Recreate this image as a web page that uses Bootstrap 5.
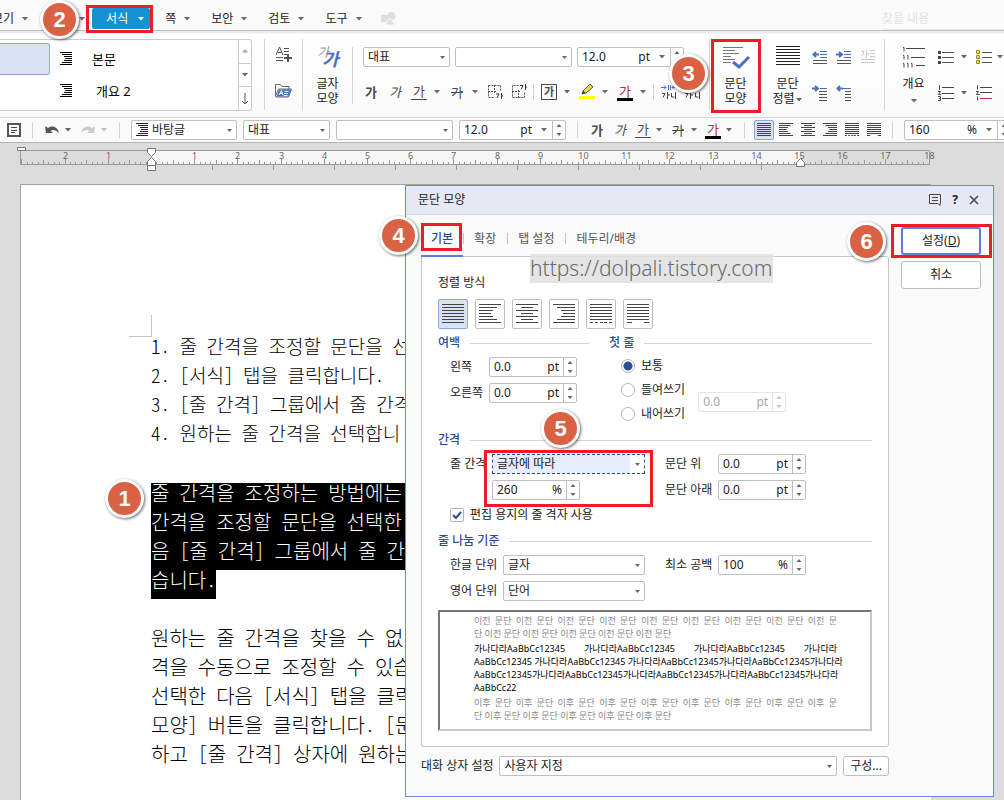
<!DOCTYPE html>
<html lang="ko">
<head>
  <meta charset="UTF-8">
  <meta name="viewport" content="width=device-width, initial-scale=1.0">
  <title>문단 모양</title>
  <link href="https://cdn.jsdelivr.net/npm/bootstrap@5.3.0/dist/css/bootstrap.min.css" rel="stylesheet">
  <style>
    body {
      font-family: "Noto Sans", "Noto Sans CJK KR", sans-serif;
      font-size: 12px;
      line-height: 20px;
      color: #222;
      background: #dcdcdc;
    }
    button, input, select { font: inherit; color: inherit; }
    button { background: none; border: 0; padding: 0; }
    svg { display: block; flex-shrink: 0; }
    .keep > * { flex-shrink: 0; }

    /* menu bar */
    .menubar { height: 31px; padding-top: 7px; background: #fafafa; border-bottom: 1px solid #bdbdbd; }
    .menu-btn { display: flex; align-items: center; gap: 7px; padding: 0 10px; height: 24px; }
    .menu-first { margin-left: -18px; }
    .menu-insert { width: 57px; justify-content: flex-end; }
    .menu-on { margin: 0 5px 0 -4px; padding: 0 5px 0 14px; gap: 9px; height: 21px; background: #1791d3; color: #fff; border-radius: 2px; }
    .find-box { width: 122px; height: 22px; border: 0; border-bottom: 1px solid #e8e8e8; background: none; padding: 0; }
    .find-box::placeholder { color: #e2e2e2; opacity: 1; }

    /* ribbon */
    .ribbon { height: 87px; padding-top: 8px; background: linear-gradient(#ececec 2px, #fff 3px, #fafafa); border-bottom: 1px solid #d6d6d6; }
    .vline { width: 1px; background: #d4d4d4; }
    .vline-tall { height: 71px; }
    .vline-mid { height: 57px; margin-top: 8px; }
    .vline-low { height: 16px; margin: 0 -1px 0 -2px; }
    .gallery { width: 252px; height: 72px; margin-right: 12px; border: 1px solid #ccc; border-left: 0; border-radius: 0 3px 3px 0; background: #fff; }
    .style-on { width: 50px; height: 32px; margin-top: 3px; border: 1px solid #8ea6de; border-left: 0; border-radius: 0 3px 3px 0; background: #d9e1f5; }
    .style-list { padding-top: 3px; }
    .style-row { display: flex; align-items: center; height: 32px; padding-left: 10px; gap: 20px; font-size: 13px; color: #000; }
    .gallery-scroll { width: 13px; border-left: 1px solid #ccc; }
    .gallery-scroll button { display: flex; align-items: center; justify-content: center; flex: 1; }
    .gallery-scroll button + button { border-top: 1px solid #ccc; }
    .side-tools { width: 37px; padding-top: 8px; gap: 20px; }
    .big-btn { position: relative; width: 49px; height: 72px; padding-top: 7px; line-height: 15px; display: flex; flex-direction: column; align-items: center; }
    .big-btn svg.pic { margin-bottom: 6px; overflow: visible; }
    .para-btn { margin: 0 3px 0 1px; }
    .font-group { margin: 8px 10px 0; width: 336px; }
    .field-row { gap: 5px; margin-bottom: 15px; }
    .tool-row { display: flex; align-items: center; gap: 8px; height: 20px; }
    .tool-stack { display: grid; gap: 16px; margin-top: 8px; }
    .tool { display: flex; align-items: center; gap: 6px; }
    .glyph { width: 16px; text-align: center; font-size: 13px; line-height: 18px; color: #4a4a4a; }
    .glyph-u { border-bottom: 1px solid #4a4a4a; line-height: 15px; }
    .glyph-box { border: 1px solid #4a4a4a; font-size: 11px; line-height: 14px; font-weight: bold; }
    .glyph-color { border-bottom: 3px solid #000; color: #b23030; line-height: 14px; }

    /* fields */
    .pick, .spin { height: 20px; border: 1px solid #bfbfbf; border-radius: 2px; background-color: #fff; }
    .pick {
      appearance: none;
      padding: 0 16px 0 4px;
      line-height: 18px;
      background-image: url("data:image/svg+xml,%3Csvg xmlns='http://www.w3.org/2000/svg' width='5' height='3'%3E%3Cpath d='M0 0h5L2.5 3z' fill='%23666'/%3E%3C/svg%3E");
      background-repeat: no-repeat;
      background-position: right 4px center;
    }
    .spin { display: flex; align-items: center; line-height: 18px; }
    .spin input { width: 0; flex: 1; min-width: 0; border: 0; padding: 0 0 0 4px; height: 18px; background: none; outline: 0; }
    .spin .unit { margin-right: 4px; }
    .spin .drop { width: 16px; display: flex; justify-content: center; }
    .spin .updown { align-self: stretch; width: 13px; border-left: 1px solid #bfbfbf; display: flex; align-items: center; justify-content: center; }
    .w-name { width: 87px; }
    .w-font { width: 117px; }
    .w-size { width: 107px; }
    .faded { opacity: .4; }

    /* quick bar */
    .quickbar { height: 25px; padding-left: 7px; gap: 8px; background: #fafafa; border-bottom: 1px solid #b4b4b4; }
    .quickbar > .vline { height: 16px; margin: 0 3px; }
    .quickbar .tool { gap: 4px; }
    .quick-fields { gap: 6px; }
    .quick-text { gap: 7px; }
    .quick-style { width: 106px; padding-left: 4px; }
    .quick-style .pick { border: 0; height: 18px; flex: 1; width: 0; }
    .quick-aligns { gap: 2px; margin: 0 -3px 0 -2px; }
    .mini-align { width: 20px; height: 20px; display: flex; align-items: center; justify-content: center; border-radius: 2px; color: #444; }
    .mini-align.on, .align-btn.on { background: #d9e1f5; border: 1px solid #8ea6de; }

    /* document */
    .sheet { max-width: 911px; min-height: 640px; margin-left: 20px; padding: 146px 0 0 130px; background: #fff; border: 1px solid #a3a3a3; border-right: 0; }
    .doc { color: #000; font: 300 20px/29px "Noto Sans CJK KR", sans-serif; font-feature-settings: "hwid"; white-space: nowrap; overflow: hidden; }
    .doc p { margin: 0; }
    .doc .steps { font-size: 19px; }
    .doc-area { position: relative; }
    .corner { position: absolute; left: -22px; top: -16px; width: 23px; height: 22px; border: solid #c4c4c4; border-width: 0 1px 1px 0; }
    .doc .picked { margin: 36px 0 24px; color: #fff; }
    .picked span { display: block; line-height: 19px; padding-bottom: 10px; background: #000; }
    .picked .picked-end { width: fit-content; }

    /* numbered pins and red frames */
    .pin { position: absolute; z-index: 5; width: 39px; height: 39px; border: 3px solid #fff; border-radius: 50%; background: #d96245; box-shadow: 1px 1px 3px rgba(0, 0, 0, .6); color: #fff; font: bold 22px/33px "Liberation Sans", sans-serif; text-align: center; }
    .hot { position: absolute; z-index: 4; border: 3px solid #ee1c25; pointer-events: none; }
    .pin-1 { left: -46px; top: 148px; }
    .pin-2 { left: 40px; top: 0; }
    .pin-3 { left: -42px; top: 15px; }
    .pin-4 { left: -42px; top: 1px; }
    .pin-5 { left: 91px; top: -45px; }
    .pin-6 { left: -54px; top: -5px; }
    .hot-menu { left: 86px; top: 5px; width: 67px; height: 28px; }
    .hot-para { inset: 0 -1px -2px 0; }
    .hot-tab { left: 0; top: 8px; width: 41px; height: 28px; }
    .hot-gap { left: 34px; top: -4px; width: 169px; height: 57px; }
    .hot-ok { inset: -3px -11px -3px -10px; }

    /* dialog */
    .dlg { position: absolute; left: 405px; right: 10px; top: 42px; z-index: 3; background: #fafafa; border: 1px solid #6e8acb; }
    .dlg-title { height: 29px; padding: 0 12px; background: #e6e8f4; border-bottom: 1px solid #cbd6ee; }
    .dlg-tools { gap: 10px; }
    .dlg-body { padding: 0 12px 20px 15px; gap: 12px; }
    .dlg-main { flex: 1; min-width: 0; }
    .tab-bar { height: 41px; }
    .tab-btn { position: relative; padding: 0 11px; line-height: 48px; height: 42px; color: #555; }
    .tab-btn + .tab-btn::before { content: ""; position: absolute; left: 0; top: 18px; height: 11px; border-left: 1px solid #c4c4c4; }
    .tab-btn.on { padding: 0 10px; color: #2d4c96; font-weight: 500; border-bottom: 2px solid #5b7fd4; }
    .panel { padding: 16px 16px 15px; background: #fff; border: 1px solid #c6c6c6; border-radius: 0 3px 3px 3px; }
    .align-row { gap: 7px; margin: 6px 0 4px; }
    .align-btn { width: 30px; height: 30px; display: flex; align-items: center; justify-content: center; border: 1px solid #bfbfbf; border-radius: 2px; background: #fff; color: #444; }
    .two-col { gap: 20px; }
    .sect { display: flex; align-items: center; gap: 10px; color: #2d4c96; font-weight: 500; }
    .sect::after { content: ""; flex: 1; border-top: 1px solid #d4d4d4; }
    .rows { padding: 4px 0 0 12px; display: grid; gap: 6px; }
    .line { display: flex; align-items: center; }
    .cap-s { width: 39px; }
    .cap-m { width: 53px; }
    .cap-xs { width: 42px; }
    .num { width: 88px; }
    .pick-wide { width: 153px; }
    .pick-mid { width: 142px; margin-right: 20px; }
    .pick-focus {
      border: 1px dashed #2d4c96;
      border-radius: 0;
      background-color: #e7edfb;
      background-image: url("data:image/svg+xml,%3Csvg xmlns='http://www.w3.org/2000/svg' width='14' height='18'%3E%3Cpath d='M0 0h14v18H0z' fill='%23fff'/%3E%3Cpath d='M5 8h5L7.500 11z' fill='%23666'/%3E%3C/svg%3E");
      background-position: right center;
    }
    .margin-col { width: 151px; }
    .opts { padding: 1px 0 0 12px; }
    .opt-pair { gap: 13px; }
    .opt { display: flex; align-items: center; gap: 6px; height: 24px; }
    .opt-grid { padding-left: 12px; margin: 3px 0 4px; }
    .dot, .tick { appearance: none; width: 14px; height: 14px; margin: 0; border: 1px solid #b4b4b4; background: #fff; }
    .dot { border-radius: 50%; }
    .dot:checked { background: radial-gradient(#2d4c96 4px, #fff 5px); }
    .tick { border-radius: 2px; background: #fff url("data:image/svg+xml,%3Csvg xmlns='http://www.w3.org/2000/svg' width='12' height='12'%3E%3Cpath d='M2 6l3 3 5-6' fill='none' stroke='%232d4c96' stroke-width='2'/%3E%3C/svg%3E") center no-repeat; }
    .over-gap { position: absolute; left: 12px; top: 4px; }
    .sample { margin-top: 9px; padding: 2px 33px 5px 34px; border: 2px solid #c8c8c8; border-top-color: #777; border-left-color: #777; font-size: 9px; line-height: 13px; color: #888; white-space: nowrap; }
    .sample p { margin: 0 0 2px; }
    .sample span { display: block; }
    .sample .full { text-align-last: justify; }
    .sample .now { color: #000; }
    .plain-btn { border: 1px solid #bfbfbf; border-radius: 3px; background: #fff; }
    .side-btns { width: 80px; flex-shrink: 0; padding-top: 12px; }
    .side-btns .plain-btn { height: 28px; width: 100%; }
    .ok-wrap { position: relative; margin-bottom: 6px; }
    .side-btns .ok { border: 2px solid #5b7fd4; }
    .preset { margin-top: 9px; gap: 6px; }
    .preset .pick { min-width: 0; }
    .preset .plain-btn { width: 46px; height: 20px; line-height: 18px; }
    .stamp { position: absolute; left: 124px; top: 68px; background: rgba(225, 225, 225, .85); color: #6b6b6b; font: 300 21px/29px "Noto Sans", sans-serif; }
  </style>
</head>
<body class="vh-100 overflow-hidden d-flex flex-column position-relative">

<svg width="0" height="0" class="position-absolute">
  <defs>
    <symbol id="caret" viewBox="0 0 8 4"><path d="M1 0h6L4 3.500z" fill="#666"/></symbol>
    <symbol id="updown" viewBox="0 0 6 14"><path d="M.5 4h5L3 1zM.5 10h5L3 13z" fill="#666"/></symbol>
    <symbol id="al-full" viewBox="0 .25 22 7" preserveAspectRatio="none"><path vector-effect="non-scaling-stroke" stroke="currentColor" shape-rendering="crispEdges" d="M0 .5h22M0 1.500h22M0 2.500h22M0 3.500h22M0 4.500h22M0 5.500h22M0 6.500h22"/></symbol>
    <symbol id="al-left" viewBox="0 .25 22 7" preserveAspectRatio="none"><path vector-effect="non-scaling-stroke" stroke="currentColor" shape-rendering="crispEdges" d="M0 .5h22M0 1.500h18M0 2.500h14M0 3.500h12M0 4.500h14M0 5.500h18M0 6.500h22"/></symbol>
    <symbol id="al-center" viewBox="0 .25 22 7" preserveAspectRatio="none"><path vector-effect="non-scaling-stroke" stroke="currentColor" shape-rendering="crispEdges" d="M0 .5h22M5 1.500h12M0 2.500h22M5 3.500h12M0 4.500h22M5 5.500h12M0 6.500h22"/></symbol>
    <symbol id="al-right" viewBox="0 .25 22 7" preserveAspectRatio="none"><path vector-effect="non-scaling-stroke" stroke="currentColor" shape-rendering="crispEdges" d="M0 .5h22M4 1.500h18M8 2.500h14M10 3.500h12M8 4.500h14M4 5.500h18M0 6.500h22"/></symbol>
    <symbol id="al-dist" viewBox="0 .25 22 7" preserveAspectRatio="none"><path vector-effect="non-scaling-stroke" stroke="currentColor" shape-rendering="crispEdges" d="M0 .5h22M0 1.500h22M0 2.500h22M0 3.500h22M0 4.500h22M0 5.500h22M0 6.500h3M5 6.500h3M10 6.500h3M14 6.500h3M19 6.500h3"/></symbol>
    <symbol id="al-split" viewBox="0 .25 22 7" preserveAspectRatio="none"><path vector-effect="non-scaling-stroke" stroke="currentColor" shape-rendering="crispEdges" d="M0 .5h22M0 1.500h22M0 2.500h22M0 3.500h22M0 4.500h22M0 5.500h22M0 6.500h5M17 6.500h5"/></symbol>
  </defs>
</svg>

<nav class="menubar d-flex align-items-center keep overflow-hidden flex-shrink-0">
  <button type="button" class="menu-btn menu-first">보기<svg width="8" height="4"><use href="#caret"/></svg></button>
  <button type="button" class="menu-btn menu-insert" aria-label="입력"><svg width="8" height="4"><use href="#caret"/></svg></button>
  <button type="button" class="menu-btn menu-on">서식<svg width="8" height="4"><path d="M1 0h6L4 3.500z" fill="#fff"/></svg></button>
  <button type="button" class="menu-btn">쪽<svg width="8" height="4"><use href="#caret"/></svg></button>
  <button type="button" class="menu-btn">보안<svg width="8" height="4"><use href="#caret"/></svg></button>
  <button type="button" class="menu-btn">검토<svg width="8" height="4"><use href="#caret"/></svg></button>
  <button type="button" class="menu-btn">도구<svg width="8" height="4"><use href="#caret"/></svg></button>
  <svg width="15" height="14" class="ms-2" fill="#dedede"><path d="M0 3h7v7H0z"/><circle cx="10.500" cy="4" r="4"/><path d="M9 6l5 7H4z" stroke="#fafafa"/></svg>
  <input class="find-box ms-auto" type="text" placeholder="찾을 내용" aria-label="찾을 내용">
</nav>

<div class="ribbon d-flex keep align-items-start flex-shrink-0">
  <div class="gallery d-flex">
    <div class="style-on"></div>
    <div class="style-list flex-fill">
      <div class="style-row"><svg width="12" height="14"><use href="#al-right" width="12" height="14"/></svg>본문</div>
      <div class="style-row"><svg width="12" height="14"><use href="#al-right" width="12" height="14"/></svg><span class="ps-1">개요 2</span></div>
    </div>
    <div class="gallery-scroll d-flex flex-column">
      <button type="button" aria-label="위로"><svg width="6" height="4"><path d="M0 3.500h6L3 0z" fill="#aaa"/></svg></button>
      <button type="button" aria-label="아래로"><svg width="8" height="4"><use href="#caret"/></svg></button>
      <button type="button" aria-label="펼치기"><svg width="8" height="12" fill="none" stroke="#555"><path d="M4 0v11M1 8l3 3 3-3"/></svg></button>
    </div>
  </div>
  <div class="vline vline-tall"></div>
  <div class="side-tools d-flex flex-column align-items-center">
    <button type="button" aria-label="스타일 추가"><svg width="16" height="16" fill="none" stroke="#555"><path d="M0 8L3.500 0 7 8M1.500 5.500h4M8 1.500h5M8 4.500h5M8 7.500h5M0 10.500h7M0 13.500h7"/><path d="M12 7v8M8 11h8" stroke-width="2"/></svg></button>
    <button type="button" aria-label="스타일 불러오기"><svg width="17" height="15"><path d="M.5 13V1.500h5l1.500 2h7v3M.5 13l3-7h13l-3 8H1z" fill="#fff" stroke="#666"/><path d="M4 6.500h12l-2.500 7H1.500z" fill="#4c6fc0"/><path d="M4 12l2.500-4.500L8 12M5 10.500h2.500M9.500 8.500h4M9 10.500h4M8.500 12.500h4" stroke="#fff" fill="none"/></svg></button>
  </div>
  <div class="vline vline-tall"></div>
  <button type="button" class="big-btn">
    <svg class="pic" width="24" height="24" font-style="italic" aria-hidden="true"><text x="1" y="11" font-size="13" fill="#999">가</text><text x="6" y="20" font-size="18" font-weight="bold" fill="#4c6fc0">가</text></svg>
    <span>글자<br>모양</span>
  </button>
  <div class="vline vline-mid"></div>
  <div class="font-group">
    <div class="field-row d-flex keep">
      <select class="pick w-name" aria-label="언어"><option>대표</option></select>
      <select class="pick w-font" aria-label="글꼴"><option></option></select>
      <div class="spin w-size"><input value="12.0" aria-label="글자 크기"><span class="unit">pt</span><span class="drop"><svg width="8" height="4"><use href="#caret"/></svg></span><span class="updown"><svg width="6" height="14"><use href="#updown"/></svg></span></div>
    </div>
    <div class="tool-row keep">
      <button type="button" class="tool"><span class="glyph fw-bold">가</span></button>
      <button type="button" class="tool"><span class="glyph fst-italic">가</span></button>
      <button type="button" class="tool"><span class="glyph glyph-u">가</span><svg width="8" height="4"><use href="#caret"/></svg></button>
      <button type="button" class="tool"><span class="glyph text-decoration-line-through">가</span><svg width="8" height="4"><use href="#caret"/></svg></button>
      <button type="button" aria-label="아래 첨자"><svg width="16" height="16"><path d="M1.500 1.500h12v6M1.500 1.500v12h6M7.500 1v8M1 7.500h8" fill="none" stroke="#555" stroke-dasharray="2 1"/><path d="M9 10h3l-2 4M14.500 9v6M14 12h2" fill="none" stroke="#333"/></svg></button>
      <button type="button" aria-label="위 첨자"><svg width="16" height="16"><path d="M7.500 1.500h-6v12h12v-6M7.500 6v8M1 7.500h8" fill="none" stroke="#555" stroke-dasharray="2 1"/><path d="M9 1.500h3l-2 4M14.500 0v6M14 3h2" fill="none" stroke="#333"/></svg></button>
      <div class="vline vline-low"></div>
      <button type="button" class="tool"><span class="glyph glyph-box">가</span><svg width="8" height="4"><use href="#caret"/></svg></button>
      <button type="button" class="tool" aria-label="형광펜"><svg width="16" height="16"><path d="M3 10l1-3 7-7 3 3-7 6z" fill="#e9dd3c" stroke="#555"/><path d="M3 10l1-3 3 2z" fill="#444"/><path d="M0 12h16v3H0z" fill="#ff0"/></svg><svg width="8" height="4"><use href="#caret"/></svg></button>
      <button type="button" class="tool"><span class="glyph glyph-color">가</span><svg width="8" height="4"><use href="#caret"/></svg></button>
      <div class="vline vline-low"></div>
      <button type="button" aria-label="자간 좁게"><svg width="16" height="16" fill="none"><path d="M0 3.500h5M11 3.500h5M7.500 1v5M9.500 1v5M3 1.500l2 2-2 2M13 1.500l-2 2 2 2" stroke="#4c6fc0"/><path d="M1 9.500h3l-2 4M6.500 8v7M7 11h2M10.500 9v4h3M14.500 8v7" stroke="#444"/></svg></button>
      <button type="button" aria-label="자간 넓게"><svg width="16" height="16" fill="none"><path d="M0 3.500h16M3 1.500l-2 2 2 2M13 1.500l2 2-2 2" stroke="#4c6fc0"/><path d="M0 9.500h3l-2 4M5.500 8v7M6 11h2M10.500 9v4h3M14.500 8v7" stroke="#444"/></svg></button>
    </div>
  </div>
  <div class="vline vline-tall"></div>
  <button type="button" class="big-btn para-btn">
    <svg class="pic" width="28" height="24" fill="none"><path d="M1 1.500h20M1 4.500h12M1 7.500h16M1 10.500h8M1 13.500h12M1 16.500h8" stroke="#777"/><path d="M11 16l6 5 10-10" stroke="#4c6fc0" stroke-width="3"/></svg>
    <span>문단<br>모양</span>
    <i class="hot hot-para"></i>
    <span class="pin pin-3">3</span>
  </button>
  <button type="button" class="big-btn">
    <svg class="pic" width="24" height="24"><use href="#al-full" width="24" height="21"/></svg>
    <span>문단<br>정렬<svg width="8" height="4" class="d-inline-block"><use href="#caret"/></svg></span>
  </button>
  <div class="tool-stack">
    <div class="tool-row">
      <button type="button" aria-label="왼쪽 여백 줄이기"><svg width="16" height="16" fill="none"><path d="M8 2.500h7M8 5.500h7M8 8.500h7" stroke="#4c6fc0"/><path d="M1 11.500h14M1 14.500h14" stroke="#555"/><path d="M1 5.500h6M4 3L1.500 5.500 4 8" stroke="#4c6fc0" stroke-width="2"/></svg></button>
      <button type="button" aria-label="왼쪽 여백 늘리기"><svg width="16" height="16" fill="none"><path d="M8 2.500h7M8 5.500h7M8 8.500h7" stroke="#4c6fc0"/><path d="M1 11.500h14M1 14.500h14" stroke="#555"/><path d="M0 5.500h6M3 3l3 2.500L3 8" stroke="#4c6fc0" stroke-width="2"/></svg></button>
      <button type="button" aria-label="첫 글자 장식"><svg width="16" height="16" fill="none" stroke="#c8c8c8"><path d="M1 2.500h3l-2 5M6.500 1v8M7 5h2M10 1.500h5M10 4.500h5M10 7.500h5M1 10.500h14M1 13.500h14"/></svg></button>
    </div>
    <div class="tool-row">
      <button type="button" aria-label="첫 줄 들여쓰기"><svg width="16" height="16" fill="none"><path d="M7 6.500h8M7 9.500h8M7 12.500h8M7 15.500h8" stroke="#555"/><path d="M8 3.500h7" stroke="#4c6fc0"/><path d="M0 3.500h6M3 1l3 2.500L3 6" stroke="#4c6fc0" stroke-width="2"/></svg></button>
      <button type="button" aria-label="첫 줄 내어쓰기"><svg width="16" height="16" fill="none"><path d="M9 6.500h6M9 9.500h6M9 12.500h6M9 15.500h6" stroke="#555"/><path d="M7 3.500h8" stroke="#4c6fc0"/><path d="M1 3.500h6M4 1L1.500 3.500 4 6" stroke="#4c6fc0" stroke-width="2"/></svg></button>
    </div>
  </div>
  <div class="vline vline-tall ms-2"></div>
  <button type="button" class="big-btn ms-1">
    <svg class="pic" width="24" height="24" fill="none" stroke="#444"><path d="M1 1.500h1v4M4 2.500h19M1 9.500h1v4M5 9.500h1v4M9 11.500h14M1 17.500h1v4M5 17.500h1v4M9 17.500h1v4M14 19.500h9"/></svg>
    <span>개요</span>
    <svg width="8" height="4" class="mt-2"><use href="#caret"/></svg>
  </button>
  <div class="tool-stack">
    <div class="tool-row">
      <button type="button" class="tool" aria-label="글머리표"><svg width="16" height="16" shape-rendering="crispEdges"><path d="M4 3.500h12M4 8.500h12M4 13.500h12" stroke="#555"/><path d="M0 2h3v3H0zM0 7h3v3H0zM0 12h3v3H0z" fill="#444"/></svg><svg width="8" height="4"><use href="#caret"/></svg></button>
      <button type="button" class="tool" aria-label="그림 글머리표"><svg width="16" height="16"><path d="M6 3.500h10M6 8.500h10M6 13.500h10" stroke="#555"/><path d="M.5 1.500h3v3h-3zM.5 6.500h3v3h-3zM.5 11.500h3v3h-3z" fill="#f4dc3a" stroke="#8f8a30"/></svg></button>
    </div>
    <div class="tool-row">
      <button type="button" class="tool" aria-label="문단 번호"><svg width="16" height="16" fill="none" stroke="#444"><path d="M4 2.500h12M4 8.500h12M4 13.500h12M1 .5h.5v4M0 6.500h2.500L.5 9.500h3M0 11.500h2.500v4H0M1 13.500h2"/></svg><svg width="8" height="4"><use href="#caret"/></svg></button>
      <button type="button" class="tool" aria-label="새 번호"><svg width="16" height="16" fill="none" stroke="#444"><path d="M4 2.500h12M4 7.500h12M1 .5h.5v4M0 6.500h2.500L.5 9.500h3"/><path d="M4 13.500h12M1 11.500h.5v4" stroke="#c03040"/></svg></button>
    </div>
  </div>
  <svg width="8" height="4" class="ms-1 mt-3"><use href="#caret"/></svg>
</div>

<div class="quickbar d-flex align-items-center keep flex-shrink-0">
  <button type="button" aria-label="문서"><svg width="14" height="14"><path d="M1 1h12v12H1z" fill="#fff" stroke="#555" stroke-width="2"/><path d="M4 4.500h6M4 7.500h6M4 9.500h4" stroke="#444"/></svg></button>
  <div class="vline"></div>
  <button type="button" class="tool" aria-label="되돌리기"><svg width="16" height="12"><path d="M1 2l1 7h7L6.500 7C9 5 12 6 15 9 14 3 8 1 4 4z" fill="#555"/></svg><svg width="8" height="4"><use href="#caret"/></svg></button>
  <button type="button" class="tool faded" aria-label="다시 실행"><svg width="16" height="12"><path d="M15 2l-1 7H7l2.500-2C7 5 4 6 1 9 2 3 8 1 12 4z" fill="#888"/></svg><svg width="8" height="4"><use href="#caret"/></svg></button>
  <div class="vline"></div>
  <div class="quick-fields d-flex keep">
    <div class="spin quick-style"><svg width="12" height="14"><use href="#al-right" width="12" height="14"/></svg><select class="pick" aria-label="스타일"><option>바탕글</option></select></div>
    <select class="pick w-name" aria-label="언어"><option>대표</option></select>
    <select class="pick w-font" aria-label="글꼴"><option></option></select>
    <div class="spin w-size"><input value="12.0" aria-label="글자 크기"><span class="unit">pt</span><span class="drop"><svg width="8" height="4"><use href="#caret"/></svg></span><span class="updown"><svg width="6" height="14"><use href="#updown"/></svg></span></div>
  </div>
  <div class="vline"></div>
  <div class="quick-text d-flex align-items-center keep">
    <button type="button" class="tool"><span class="glyph fw-bold">가</span></button>
    <button type="button" class="tool"><span class="glyph fst-italic">가</span></button>
    <button type="button" class="tool"><span class="glyph glyph-u">가</span><svg width="8" height="4"><use href="#caret"/></svg></button>
    <button type="button" class="tool"><span class="glyph text-decoration-line-through">가</span><svg width="8" height="4"><use href="#caret"/></svg></button>
    <button type="button" class="tool"><span class="glyph glyph-color">가</span><svg width="8" height="4"><use href="#caret"/></svg></button>
  </div>
  <div class="vline"></div>
  <div class="quick-aligns d-flex">
    <button type="button" class="mini-align on" aria-label="양쪽 정렬"><svg width="14" height="14"><use href="#al-full" width="14" height="14"/></svg></button>
    <button type="button" class="mini-align" aria-label="왼쪽 정렬"><svg width="14" height="14"><use href="#al-left" width="14" height="14"/></svg></button>
    <button type="button" class="mini-align" aria-label="가운데 정렬"><svg width="14" height="14"><use href="#al-center" width="14" height="14"/></svg></button>
    <button type="button" class="mini-align" aria-label="오른쪽 정렬"><svg width="14" height="14"><use href="#al-right" width="14" height="14"/></svg></button>
    <button type="button" class="mini-align" aria-label="배분 정렬"><svg width="14" height="14"><use href="#al-dist" width="14" height="14"/></svg></button>
    <button type="button" class="mini-align" aria-label="나눔 정렬"><svg width="14" height="14"><use href="#al-split" width="14" height="14"/></svg></button>
  </div>
  <div class="vline"></div>
  <div class="spin w-size"><input value="160" aria-label="줄 간격"><span class="unit">%</span><span class="drop"><svg width="8" height="4"><use href="#caret"/></svg></span><span class="updown"><svg width="6" height="14"><use href="#updown"/></svg></span></div>
</div>

<main class="position-relative flex-fill overflow-hidden">
  <svg id="ruler" width="940" height="41"></svg>

  <div class="sheet">
    <div class="doc-area">
      <div class="corner"></div>
      <div class="doc">
        <div class="steps">
          <p>1. 줄 간격을 조정할 문단을 선</p>
          <p>2. [서식] 탭을 클릭합니다.</p>
          <p>3. [줄 간격] 그룹에서 줄 간격</p>
          <p>4. 원하는 줄 간격을 선택합니</p>
        </div>
        <p class="picked">
          <span>줄 간격을 조정하는 방법에는</span>
          <span>간격을 조정할 문단을 선택한</span>
          <span>음 [줄 간격] 그룹에서 줄 간</span>
          <span class="picked-end">습니다.</span>
        </p>
        <p>원하는 줄 간격을 찾을 수 없</p>
        <p>격을 수동으로 조정할 수 있습</p>
        <p>선택한 다음 [서식] 탭을 클릭</p>
        <p>모양] 버튼을 클릭합니다. [문</p>
        <p>하고 [줄 간격] 상자에 원하는</p>
      </div>
      <span class="pin pin-1">1</span>
    </div>
  </div>

  <section class="dlg" role="dialog" aria-label="문단 모양">
    <header class="dlg-title d-flex align-items-center">
      <span class="me-auto">문단 모양</span>
      <div class="dlg-tools d-flex align-items-center">
        <button type="button" aria-label="의견"><svg width="13" height="12" fill="none" stroke="#444"><path d="M.5 .5h11v9H11v2l-2-2H.5zM3 3.500h6M3 6.500h6"/></svg></button>
        <button type="button" class="fw-bold" aria-label="도움말">?</button>
        <button type="button" aria-label="닫기"><svg width="13" height="12" fill="none" stroke="#444" stroke-width="1.500"><path d="M2 2l8 8M10 2l-8 8"/></svg></button>
      </div>
    </header>

    <div class="dlg-body d-flex">
      <div class="dlg-main">
        <div class="tab-bar d-flex" role="tablist">
          <button type="button" role="tab" aria-selected="true" class="tab-btn on">기본<i class="hot hot-tab"></i><span class="pin pin-4">4</span></button>
          <button type="button" role="tab" aria-selected="false" class="tab-btn">확장</button>
          <button type="button" role="tab" aria-selected="false" class="tab-btn">탭 설정</button>
          <button type="button" role="tab" aria-selected="false" class="tab-btn">테두리/배경</button>
        </div>

        <div class="panel">
          <div>정렬 방식</div>
          <div class="align-row d-flex">
            <button type="button" class="align-btn on" aria-label="양쪽 정렬"><svg width="22" height="21"><use href="#al-full" width="22" height="21"/></svg></button>
            <button type="button" class="align-btn" aria-label="왼쪽 정렬"><svg width="22" height="21"><use href="#al-left" width="22" height="21"/></svg></button>
            <button type="button" class="align-btn" aria-label="가운데 정렬"><svg width="22" height="21"><use href="#al-center" width="22" height="21"/></svg></button>
            <button type="button" class="align-btn" aria-label="오른쪽 정렬"><svg width="22" height="21"><use href="#al-right" width="22" height="21"/></svg></button>
            <button type="button" class="align-btn" aria-label="배분 정렬"><svg width="22" height="21"><use href="#al-dist" width="22" height="21"/></svg></button>
            <button type="button" class="align-btn" aria-label="나눔 정렬"><svg width="22" height="21"><use href="#al-split" width="22" height="21"/></svg></button>
          </div>

          <div class="two-col d-flex">
            <div class="margin-col">
              <div class="sect">여백</div>
              <div class="rows">
                <div class="line"><label class="cap-s" for="m-left">왼쪽</label><div class="spin num"><input id="m-left" value="0.0"><span class="unit">pt</span><span class="updown"><svg width="6" height="14"><use href="#updown"/></svg></span></div></div>
                <div class="line"><label class="cap-s" for="m-right">오른쪽</label><div class="spin num"><input id="m-right" value="0.0"><span class="unit">pt</span><span class="updown"><svg width="6" height="14"><use href="#updown"/></svg></span></div></div>
              </div>
            </div>
            <div class="flex-fill">
              <div class="sect">첫 줄</div>
              <div class="opts">
                <label class="opt"><input class="dot" type="radio" name="first" checked>보통</label>
                <div class="opt-pair d-flex align-items-center">
                  <div>
                    <label class="opt"><input class="dot" type="radio" name="first">들여쓰기</label>
                    <label class="opt"><input class="dot" type="radio" name="first">내어쓰기</label>
                  </div>
                  <div class="spin num faded"><input value="0.0" disabled aria-label="첫 줄 값"><span class="unit">pt</span><span class="updown"><svg width="6" height="14"><use href="#updown"/></svg></span></div>
                </div>
              </div>
            </div>
          </div>

          <div class="sect mt-1">간격</div>
          <div class="two-col d-flex position-relative">
            <div class="rows">
              <div class="line"><label class="cap-xs" for="gap-kind">줄 간격</label><select id="gap-kind" class="pick pick-wide pick-focus"><option>글자에 따라</option></select></div>
              <div class="line"><span class="cap-xs"></span><div class="spin num"><input value="260" aria-label="줄 간격 값"><span class="unit">%</span><span class="updown"><svg width="6" height="14"><use href="#updown"/></svg></span></div></div>
            </div>
            <div class="rows ps-0">
              <div class="line"><label class="cap-m" for="p-top">문단 위</label><div class="spin num"><input id="p-top" value="0.0"><span class="unit">pt</span><span class="updown"><svg width="6" height="14"><use href="#updown"/></svg></span></div></div>
              <div class="line"><label class="cap-m" for="p-bot">문단 아래</label><div class="spin num"><input id="p-bot" value="0.0"><span class="unit">pt</span><span class="updown"><svg width="6" height="14"><use href="#updown"/></svg></span></div></div>
            </div>
            <div class="over-gap">
              <i class="hot hot-gap"></i>
              <span class="pin pin-5">5</span>
            </div>
          </div>
          <label class="opt opt-grid"><input class="tick" type="checkbox" checked>편집 용지의 줄 격자 사용</label>

          <div class="sect">줄 나눔 기준</div>
          <div class="rows">
            <div class="line">
              <label class="cap-m" for="ko-unit">한글 단위</label><select id="ko-unit" class="pick pick-mid"><option>글자</option></select>
              <label class="cap-m" for="min-sp">최소 공백</label><div class="spin num"><input id="min-sp" value="100"><span class="unit">%</span><span class="updown"><svg width="6" height="14"><use href="#updown"/></svg></span></div>
            </div>
            <div class="line"><label class="cap-m" for="en-unit">영어 단위</label><select id="en-unit" class="pick pick-mid"><option>단어</option></select></div>
          </div>

          <div class="sample">
            <p><span class="full">이전 문단 이전 문단 이전 문단 이전 문단 이전 문단 이전 문단 이전 문단 이전 문단 이전 문</span><span>단 이전 문단 이전 문단 이전 문단 이전 문단 이전 문단</span></p>
            <p class="now"><span class="full">가나다라AaBbCc12345 가나다라AaBbCc12345 가나다라AaBbCc12345 가나다라</span><span class="full">AaBbCc12345 가나다라AaBbCc12345 가나다라AaBbCc12345가나다라AaBbCc12345가나다라</span><span class="full">AaBbCc12345가나다라AaBbCc12345가나다라AaBbCc12345가나다라AaBbCc12345가나다라</span><span>AaBbCc22</span></p>
            <p><span class="full">이후 문단 이후 문단 이후 문단 이후 문단 이후 문단 이후 문단 이후 문단 이후 문단 이후 문</span><span>단 이후 문단 이후 문단 이후 문단 이후 문단 이후 문단</span></p>
          </div>
        </div>

        <div class="preset d-flex align-items-center">
          <label for="preset" class="flex-shrink-0">대화 상자 설정</label>
          <select id="preset" class="pick flex-fill"><option>사용자 지정</option></select>
          <button type="button" class="plain-btn">구성...</button>
        </div>
      </div>

      <div class="side-btns">
        <div class="ok-wrap"><button type="button" class="plain-btn ok">설정(<u>D</u>)</button><i class="hot hot-ok"></i><span class="pin pin-6">6</span></div>
        <button type="button" class="plain-btn">취소</button>
      </div>
    </div>
    <div class="stamp">https://dolpali.tistory.com</div>
  </section>
</main>

<!-- drawn over the menu bar, which clips its own overflow -->
<span class="pin pin-2">2</span>
<i class="hot hot-menu"></i>

<script src="https://cdn.jsdelivr.net/npm/bootstrap@5.3.0/dist/js/bootstrap.bundle.min.js"></script>
<script>
  // ruler: zero sits on the left text edge
  const zero = 151, unit = 43.2;
  let out = '<path d="M151 8h649v13H151z" fill="#f6f6f6"/><path d="M20.500 7v14.500h909V7.500h-909" fill="none" stroke="#999"/>';
  for (let i = -24; i <= 144; i++) {
    const x = Math.round(zero + i * unit / 8) + 0.5;
    const h = i % 8 === 0 ? 5 : i % 4 === 0 ? 4 : 2;
    out += `<path d="M${x} 21v-${h}" stroke="#999"/>`;
    if (i % 8 === 0 && i > -24 && i !== 0) {
      out += `<text x="${x}" y="16" text-anchor="middle" font-size="9" fill="#666">${Math.abs(i / 8)}</text>`;
    }
  }
  for (let x = 212; x < 800; x += 61) {
    out += `<path d="M${x}.5 22v5" stroke="#999"/>`;
  }
  out += '<g fill="#fff" stroke="#777"><path d="M17.500 4.500h8v3h-8z"/>' +
    '<path d="M147.500 5.500h8v4l-4 4-4-4zM147.500 22.500v-4l4-4 4 4v4zM147.500 22.500h8v5h-8z"/>' +
    '<path d="M796.500 23.500v-4l4-4 4 4v4z"/></g>';
  document.getElementById("ruler").innerHTML = out;
</script>
</body>
</html>
